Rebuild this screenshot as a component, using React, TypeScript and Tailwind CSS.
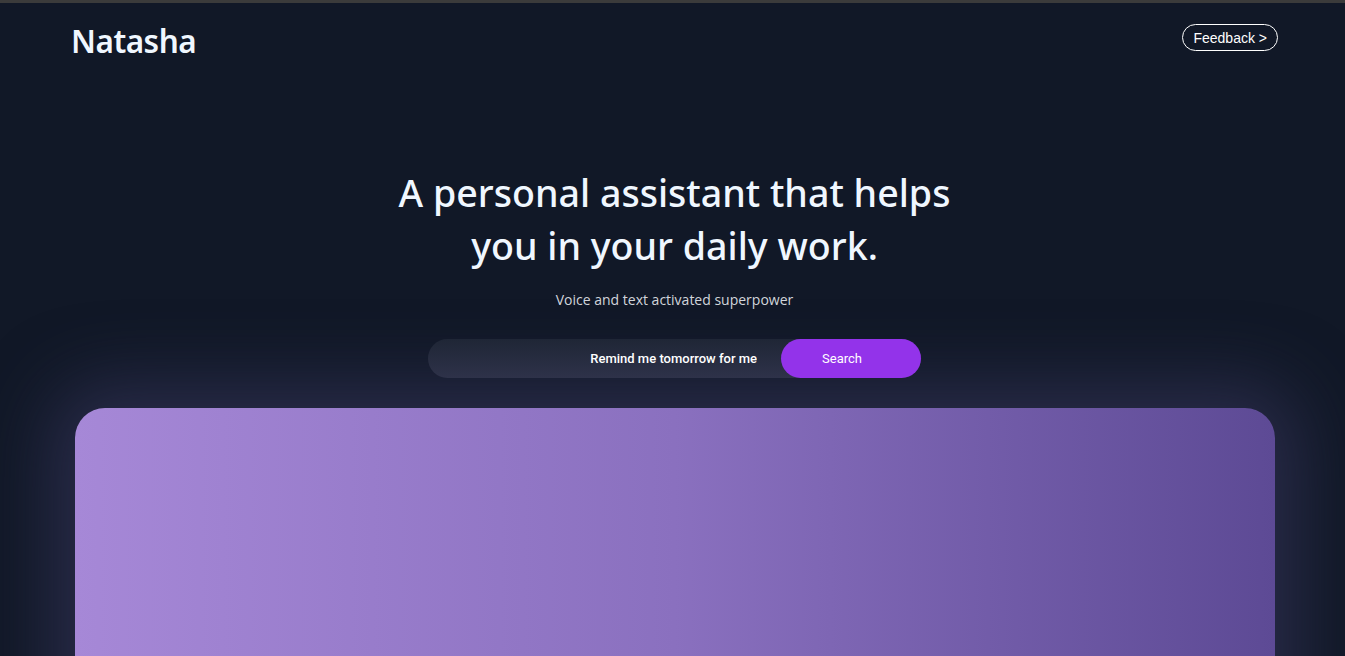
import React, { useState } from 'react'

const App = () => {
  const [query, setQuery] = useState('Remind me tomorrow for me')

  return (
    <div className="min-h-[656px] h-[656px] overflow-hidden bg-[#111827] border-t-[3px] border-[#3b3b3b] font-['Noto_Sans',sans-serif]">
      <header className="flex items-start justify-between pl-[71px] pr-[67px] pt-[18px]">
        <div className="text-[31.5px] font-semibold text-[#f0f7ff] tracking-[-0.5px] leading-[40px]">Natasha</div>
        <button className="mt-[3px] h-[27px] px-[10px] rounded-full border border-white text-white text-[14px] font-['Liberation_Sans',sans-serif] leading-none">
          Feedback &gt;
        </button>
      </header>

      <section className="flex flex-col items-center pl-[4px] mt-[105px]">
        <h1 className="text-[37.6px] font-medium leading-[53px] text-[#f0f7ff] text-center">
          A personal assistant that helps
          <br />
          you in your daily work.
        </h1>
        <p className="mt-[17px] text-[14px] text-[#d1d5db] font-['Open_Sans',sans-serif]">Voice and text activated superpower</p>

        <div className="mt-[29px] flex w-[493px] h-[39px] rounded-full bg-gradient-to-b from-[#1f2636] to-[#2e3249] font-['Roboto',sans-serif]">
          <input
            value={query}
            onChange={(e) => setQuery(e.target.value)}
            className="flex-1 bg-transparent text-right pr-[24px] text-[13px] font-medium text-white outline-none"
          />
          <button className="w-[140px] h-[39px] pr-[18px] rounded-full bg-[#9333ea] text-white text-[13px]">Search</button>
        </div>
      </section>

      <div className="mt-[30px] ml-[75px] mr-[70px] h-[300px] rounded-t-[30px] bg-gradient-to-r from-[#a688d7] via-[#8a70bf] to-[#5d4a95] shadow-[0_0_70px_25px_rgba(60,58,100,0.55)]" />
    </div>
  )
}

export default App
